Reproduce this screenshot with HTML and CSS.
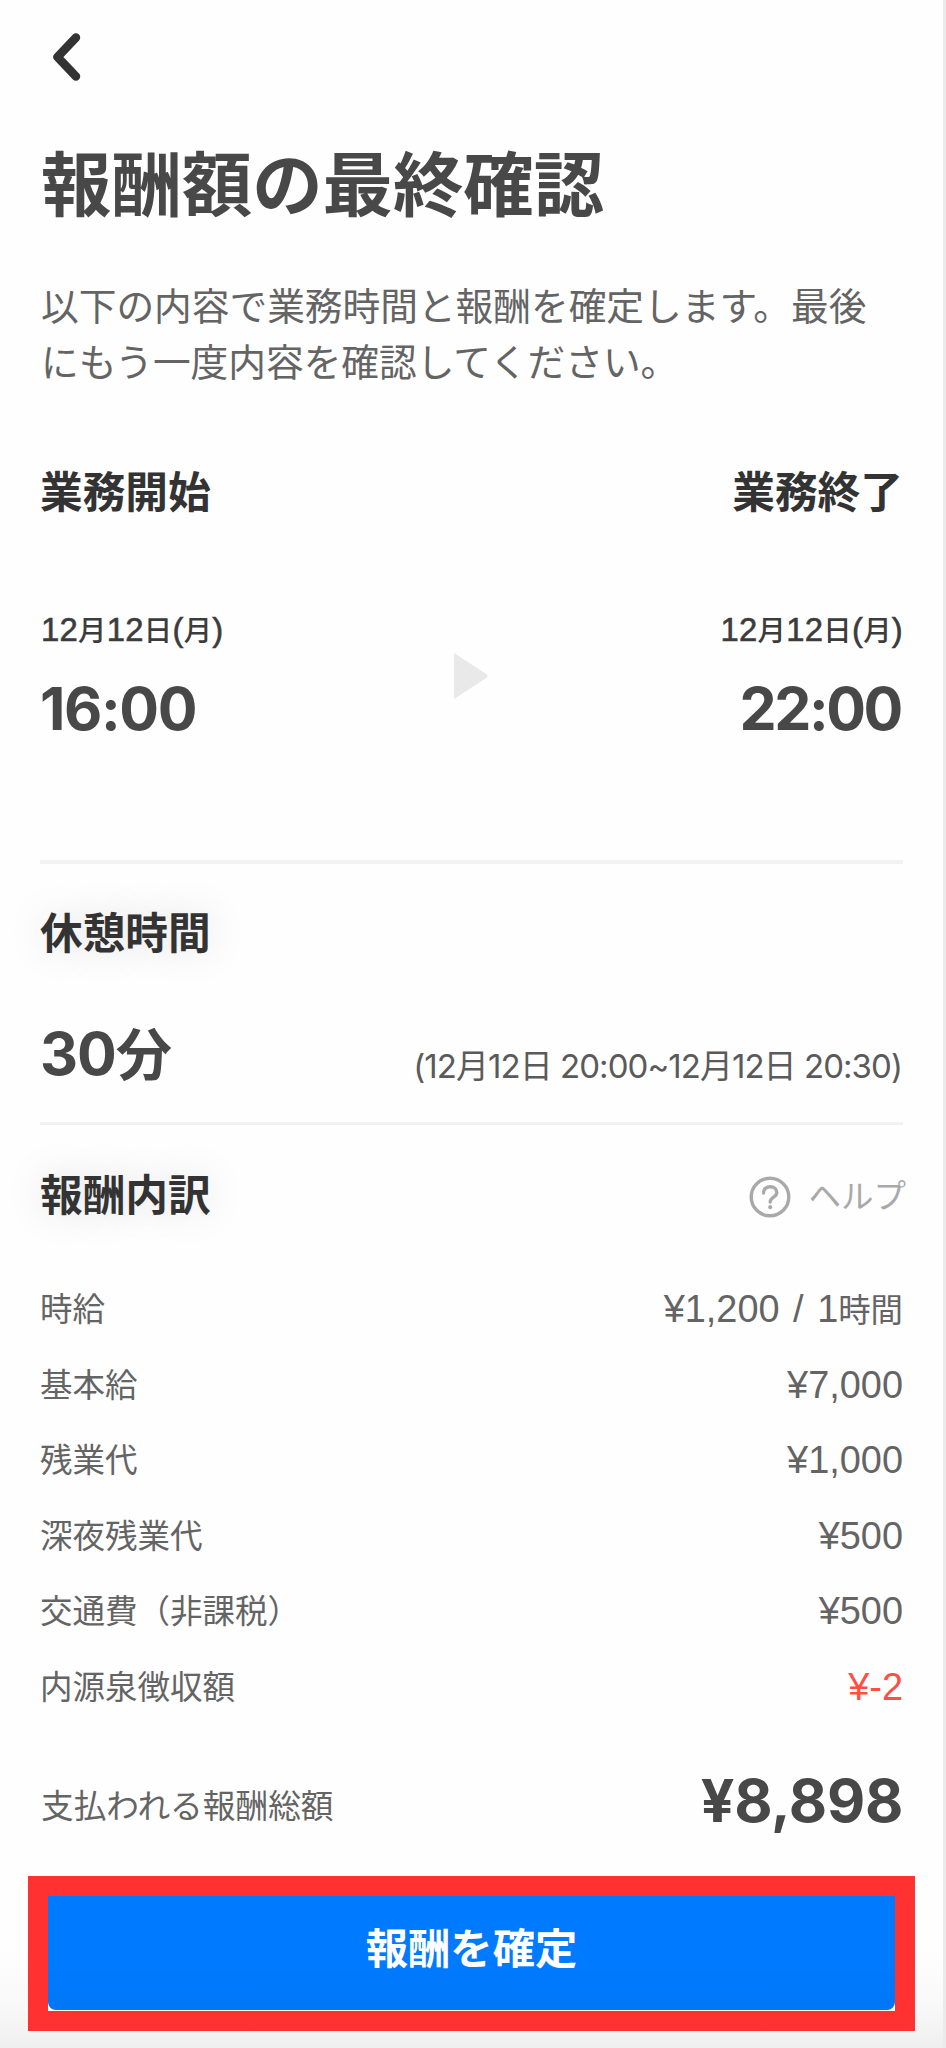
FILE: index.html
```html
<!DOCTYPE html>
<html lang="ja">
<head>
<meta charset="utf-8">
<title>報酬額の最終確認</title>
<link rel="stylesheet" href="styles.css">
</head>
<body>
<main class="screen">
  <header class="nav">
    <svg class="back" width="34" height="48" viewBox="0 0 34 48"><path d="M29 4.500 10.500 24 29 43.500" fill="none" stroke="#333" stroke-width="8.500" stroke-linecap="round" stroke-linejoin="round"/></svg>
  </header>
  <h1 class="title">報酬額の最終確認</h1>
  <p class="lead">以下の内容で業務時間と報酬を確定します。最後<br>にもう一度内容を確認してください。</p>

  <section class="period">
    <div class="edge">
      <h2 class="heading">業務開始</h2>
      <span class="date"><b>12</b>月<b>12</b>日<b>(</b>月<b>)</b></span>
      <span class="time">16:00</span>
    </div>
    <svg class="arrow" width="36" height="48" viewBox="0 0 36 48"><path d="M1 1v46L34 25.500q1.500-1.500 0-3z" fill="#e9e9e9"/></svg>
    <div class="edge edge-end">
      <h2 class="heading">業務終了</h2>
      <span class="date"><b>12</b>月<b>12</b>日<b>(</b>月<b>)</b></span>
      <span class="time">22:00</span>
    </div>
  </section>

  <section class="rest">
    <h2 class="heading glow">休憩時間</h2>
    <div class="rest-row">
      <span class="time">30<span class="unit">分</span></span>
      <span class="range">(12月12日 20:00~12月12日 20:30)</span>
    </div>
  </section>

  <section class="pay">
    <div class="pay-head">
      <h2 class="heading glow">報酬内訳</h2>
      <a class="help">
        <svg width="42" height="42" viewBox="0 0 42 42" fill="none" stroke="#a9a9a9" stroke-width="3.400" stroke-linecap="round"><circle cx="21" cy="21" r="18.800"/><path d="M14.500 17c0-4 3-6.200 6.700-6.200s6.600 2.300 6.600 5.700c0 4.800-6.600 4.600-6.600 9.500"/><path d="M21.200 31v.2" stroke-width="4"/></svg>
        <span class="help-text">ヘルプ</span>
      </a>
    </div>
    <dl class="rows">
      <div class="row"><dt>時給</dt><dd>¥1,200 / 1<span class="per">時間</span></dd></div>
      <div class="row"><dt>基本給</dt><dd>¥7,000</dd></div>
      <div class="row"><dt>残業代</dt><dd>¥1,000</dd></div>
      <div class="row"><dt>深夜残業代</dt><dd>¥500</dd></div>
      <div class="row"><dt>交通費（非課税）</dt><dd>¥500</dd></div>
      <div class="row"><dt>内源泉徴収額</dt><dd class="minus">¥-2</dd></div>
    </dl>
    <div class="total"><span class="total-label">支払われる報酬総額</span><span class="total-value">¥8,898</span></div>
  </section>

  <footer class="action">
    <div class="focus"><button class="confirm">報酬を確定</button></div>
  </footer>
</main>
</body>
</html>
```
FILE: styles.css
```css
* { box-sizing: border-box; margin: 0; padding: 0; }
body { background: #fefefe; font-family: Inter, "Noto Sans CJK JP", sans-serif; color: #484848; }
.screen {
  height: 2048px; display: flex; flex-direction: column; padding: 0 40px;
  border-right: 3px solid #ebebeb;
  background: linear-gradient(#fefefe 1950px, #f9f9f9 2005px, #efefef 2047px);
}
.nav { height: 115px; padding: 33px 0 0 7px; }
.back { display: block; }
.title { height: 142px; line-height: 142px; font-size: 70.400px; padding-left: 1px; font-weight: 700; white-space: nowrap; }
.lead { margin-top: 22px; font-size: 37.700px; padding-left: 1px; line-height: 55.500px; color: #646464; white-space: nowrap; }
.period { height: 473px; margin-top: 1px; padding-top: 72px; display: flex; justify-content: space-between; border-bottom: 4px solid #f2f2f2; }
.edge { display: flex; flex-direction: column; }
.edge-end { align-items: flex-end; }
.heading { height: 60px; line-height: 60px; font-size: 42.700px; font-weight: 700; color: #333; white-space: nowrap; }
.date { height: 40px; line-height: 40px; margin-top: 88px; padding-left: 1px; font-size: 28.300px; letter-spacing: .300px; font-weight: 500; color: #3c3c3c; white-space: nowrap; }
.date b { font: 400 32.800px/1 "Liberation Sans", sans-serif; -webkit-text-stroke: .6px #3c3c3c; }
.time { height: 70px; line-height: 70px; margin-top: 23px; font-size: 59px; font-weight: 700; letter-spacing: -1.400px; color: #484848; white-space: nowrap; }
.edge-end .time { letter-spacing: -2.400px; margin-right: 2px; }
.arrow { margin-top: 189px; margin-right: 1px; }
.rest { height: 261px; padding-top: 40px; border-bottom: 3px solid #f2f2f2; }
.glow { text-shadow: 0 0 40px rgba(0,0,0,.13); }
.rest-row { display: flex; justify-content: space-between; margin-top: 55px; }
.rest .time { margin: 0; letter-spacing: -1px; }
.unit { font-size: 56px; }
.range { height: 70px; line-height: 70px; padding-top: 12px; margin-right: 1px; font-size: 33px; letter-spacing: -.950px; color: #5a5a5a; white-space: nowrap; }
.pay { padding-top: 41px; }
.pay-head { display: flex; justify-content: space-between; }
.help { display: flex; align-items: center; gap: 17px; height: 62px; margin-right: -3px; color: #a9a9a9; }
.help-text { font-size: 32.500px; line-height: 60px; }
.rows { margin-top: 44px; }
.row { height: 75.600px; line-height: 75.600px; display: flex; justify-content: space-between; font-size: 32.500px; color: #646464; white-space: nowrap; }
.row dd { font-family: "Liberation Sans", "Noto Sans CJK JP", sans-serif; font-size: 37.900px; word-spacing: 3px; }
.per { font-size: 32.400px; }
.row .minus { color: #ff4f44; }
.total { display: flex; justify-content: space-between; height: 80px; line-height: 80px; margin-top: 35px; white-space: nowrap; }
.total-label { font-size: 32.700px; padding: 5px 0 0 1px; color: #646464; }
.total-value { font-size: 59px; font-weight: 700; letter-spacing: -.300px; }
.action { margin: auto -12px 17px; }
.focus { height: 155px; border: 20px solid #ff3131; background: #fff; }
.confirm { display: block; width: 100%; height: 114px; padding-bottom: 8px; border: 0; border-radius: 0 0 8px 8px; background: linear-gradient(#007aff 60%, #0077f6); color: #fff; font: 700 42.300px/100px Inter, "Noto Sans CJK JP", sans-serif; }
```
